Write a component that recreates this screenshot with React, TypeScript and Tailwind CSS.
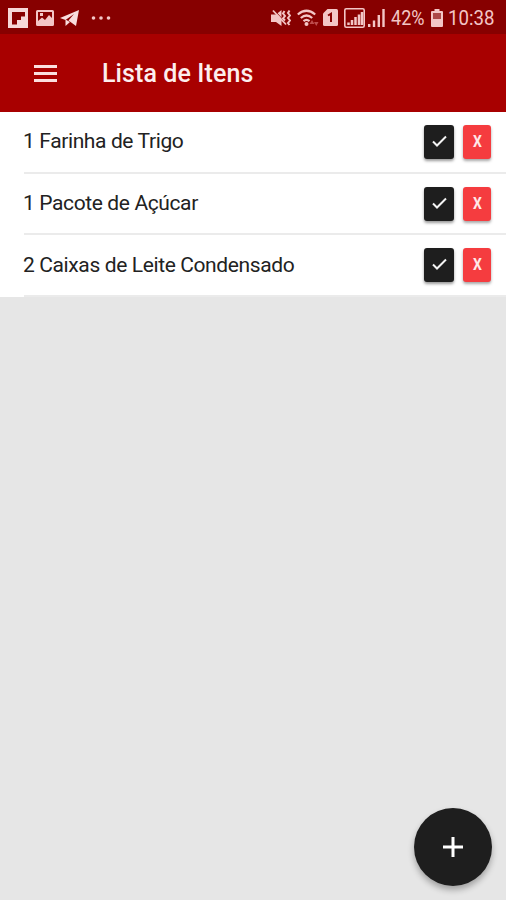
import { useState } from 'react';

type Item = {
  id: number;
  label: string;
};

const items: Item[] = [
  { id: 1, label: '1 Farinha de Trigo' },
  { id: 2, label: '1 Pacote de Açúcar' },
  { id: 3, label: '2 Caixas de Leite Condensado' },
];

const StatusBar = () => (
  <div className="flex h-[34px] items-center justify-between bg-[#870000] pl-2 pr-[9px] pt-px text-[#f3c6c6]">
    <div className="flex items-center">
      {/* Flipboard */}
      <svg className="h-5 w-5" viewBox="0 0 20 20" fill="none">
        <path d="M0 0h20v20H0z" fill="#f6d8d8" />
        <path d="M4 4h13v4.500h-4V12H9v4.500H4z" fill="#870000" />
      </svg>
      {/* Gallery */}
      <svg className="ml-2 h-4 w-[18px]" viewBox="0 0 18 16">
        <path
          fill="currentColor"
          fillRule="evenodd"
          d="M1.500 0h15A1.500 1.500 0 0 1 18 1.500v13a1.500 1.500 0 0 1-1.500 1.500h-15A1.500 1.500 0 0 1 0 14.500v-13A1.500 1.500 0 0 1 1.500 0zM2 2v9l4-3.500 3 2.500 4-5 3 3V2zM4 3h3v3H4z"
        />
      </svg>
      {/* Telegram */}
      <svg className="ml-[6px] h-[18px] w-5" viewBox="0 0 20 18">
        <path fill="#f8dede" d="M19 1 0 9l5.500 2L14 5 8.500 11.500 16 17z" />
        <path fill="#f8dede" d="M5.500 10.500v6.500l4.500-4z" />
      </svg>
      <svg className="ml-[11px] h-1 w-5" viewBox="0 0 20 4" fill="currentColor">
        <circle cx="2.500" cy="2" r="1.800" />
        <circle cx="10" cy="2" r="1.800" />
        <circle cx="17.500" cy="2" r="1.800" />
      </svg>
    </div>

    <div className="flex items-center">
      {/* Muted with vibration */}
      <svg className="h-[18px] w-5" viewBox="0 0 20 18">
        <path fill="currentColor" d="M0 5.500h5L10.500 1v16L5 13H0z" />
        <path d="m3.500 1.500 12 13" stroke="#870000" strokeWidth="1" />
        <path d="m2 1.500 13 14" stroke="currentColor" strokeWidth="1.800" />
        <path
          d="m13.500 2-1.500 2.500 2 2.500-2 2.500 2 2M18.500 1.500 17 4l2 2.500L17 9l2 2.500-2 2.500 1.500 2"
          fill="none"
          stroke="currentColor"
          strokeWidth="2"
        />
      </svg>
      {/* Wi-Fi */}
      <svg className="ml-[6px] h-[18px] w-[22px]" viewBox="0 0 22 18" fill="none">
        <path
          d="M.800 5.500Q9.500-2 18.200 5.500M3.800 9Q9.500 4 15.200 9M6.500 12.200q3-2.600 6 0"
          stroke="currentColor"
          strokeWidth="2.200"
        />
        <circle cx="9.500" cy="15" r="2" fill="currentColor" />
        <path d="m12.500 15 2.500-4 2.500 4zM17 13h4.500l-2.200 4z" fill="#bd4c4c" />
      </svg>
      {/* SIM 1 */}
      <svg className="ml-1 h-[17px] w-[15px]" viewBox="0 0 15 17">
        <path
          fill="currentColor"
          d="M4.500 0h9A1.500 1.500 0 0 1 15 1.500v14a1.500 1.500 0 0 1-1.500 1.500h-12A1.500 1.500 0 0 1 0 15.500v-11z"
        />
        <path d="M5 6.500 8 4.800V13" fill="none" stroke="#870000" strokeWidth="2" />
      </svg>
      <svg className="ml-[6px] h-5 w-[21px]" viewBox="0 0 21 20">
        <rect x=".8" y=".8" width="19.400" height="18.400" rx="1.500" fill="none" stroke="currentColor" strokeWidth="1.600" />
        <path
          d="M4.500 17v-2.500M8 17v-5M11.500 17V9M15 17V6.500M18 17V4"
          stroke="currentColor"
          strokeWidth="2.500"
        />
      </svg>
      <svg className="ml-[3px] h-[18px] w-[17px]" viewBox="0 0 17 18">
        <path d="M1.200 18v-3M6 18v-6.500M10.800 18V6M15.500 18V0" stroke="currentColor" strokeWidth="2.400" />
      </svg>
      <span className="ml-[6px] w-[35px] origin-left scale-x-[0.88] whitespace-nowrap text-[20.500px] leading-5">42%</span>
      <svg className="ml-[5px] h-[18px] w-3" viewBox="0 0 12 18">
        <path fill="currentColor" d="M3.500 0h5v2H11a1 1 0 0 1 1 1v14a1 1 0 0 1-1 1H1a1 1 0 0 1-1-1V3a1 1 0 0 1 1-1h2.500z" />
        <path fill="#ad4848" d="M2 4h8v6H2z" />
      </svg>
      <span className="ml-[5px] w-[49px] origin-left scale-x-[0.91] whitespace-nowrap text-[20.500px] leading-5">10:38</span>
    </div>
  </div>
);

const Header = () => (
  <header className="flex h-[78px] items-center bg-[#a80000] pl-[34px] text-[#fdeeee]">
    <button aria-label="Menu" className="flex h-[17px] w-[23px] flex-col justify-between">
      <span className="h-[3px] w-full bg-[#fbdede]" />
      <span className="h-[3px] w-full bg-[#fbdede]" />
      <span className="h-[3px] w-full bg-[#fbdede]" />
    </button>
    <h1 className="ml-[45px] pt-0.5 text-[25px] font-medium leading-8 tracking-[0.1px]">Lista de Itens</h1>
  </header>
);

const ItemRow = ({ item, onRemove }: { item: Item; onRemove: () => void }) => (
  <li className="ml-6 flex h-[61.700px] items-center justify-between border-b-2 border-[#ebebeb] pr-[15px]">
    <span className="-ml-px whitespace-nowrap pb-px text-[21px] leading-7 tracking-[-0.38px] text-[#222]">
      {item.label}
    </span>
    <div className="flex gap-[9px]">
      <button
        aria-label="Comprado"
        className="flex h-[34px] w-[30px] items-center justify-center rounded-[3px] bg-[#1e1e1e] shadow-[0_2px_3px_rgba(0,0,0,0.4)]"
      >
        <svg className="mb-0.5 h-3 w-[15px]" viewBox="0 0 15 12" fill="none">
          <path d="m1 6.500 4 4L14 1.500" stroke="#f4f4f4" strokeWidth="2" />
        </svg>
      </button>
      <button
        onClick={onRemove}
        className="flex h-[34px] w-7 items-center justify-center rounded-[3px] bg-[#f53c3f] pb-0.5 text-[#ffe8e8] shadow-[0_2px_3px_rgba(0,0,0,0.35)]"
      >
        <span className="scale-x-[0.82] text-[17px] font-bold leading-5">X</span>
      </button>
    </div>
  </li>
);

const App = () => {
  const [list, setList] = useState(items);

  return (
    <div className="flex h-[900px] w-[506px] flex-col overflow-hidden bg-[#e6e6e6] font-['Roboto',sans-serif]">
      <StatusBar />
      <Header />
      <ul className="bg-white">
        {list.map((item) => (
          <ItemRow
            key={item.id}
            item={item}
            onRemove={() => setList(list.filter((i) => i.id !== item.id))}
          />
        ))}
      </ul>
      <div className="mt-auto flex justify-end pb-[14px] pr-[14px]">
        <button
          aria-label="Adicionar"
          className="flex h-[78px] w-[78px] items-center justify-center rounded-full bg-[#1e1e1e] shadow-[0_4px_6px_rgba(0,0,0,0.3)]"
        >
          <svg className="h-5 w-5" viewBox="0 0 20 20" fill="none">
            <path d="M10 0v20M0 10h20" stroke="#fff" strokeWidth="3" />
          </svg>
        </button>
      </div>
    </div>
  );
};

export default App;
